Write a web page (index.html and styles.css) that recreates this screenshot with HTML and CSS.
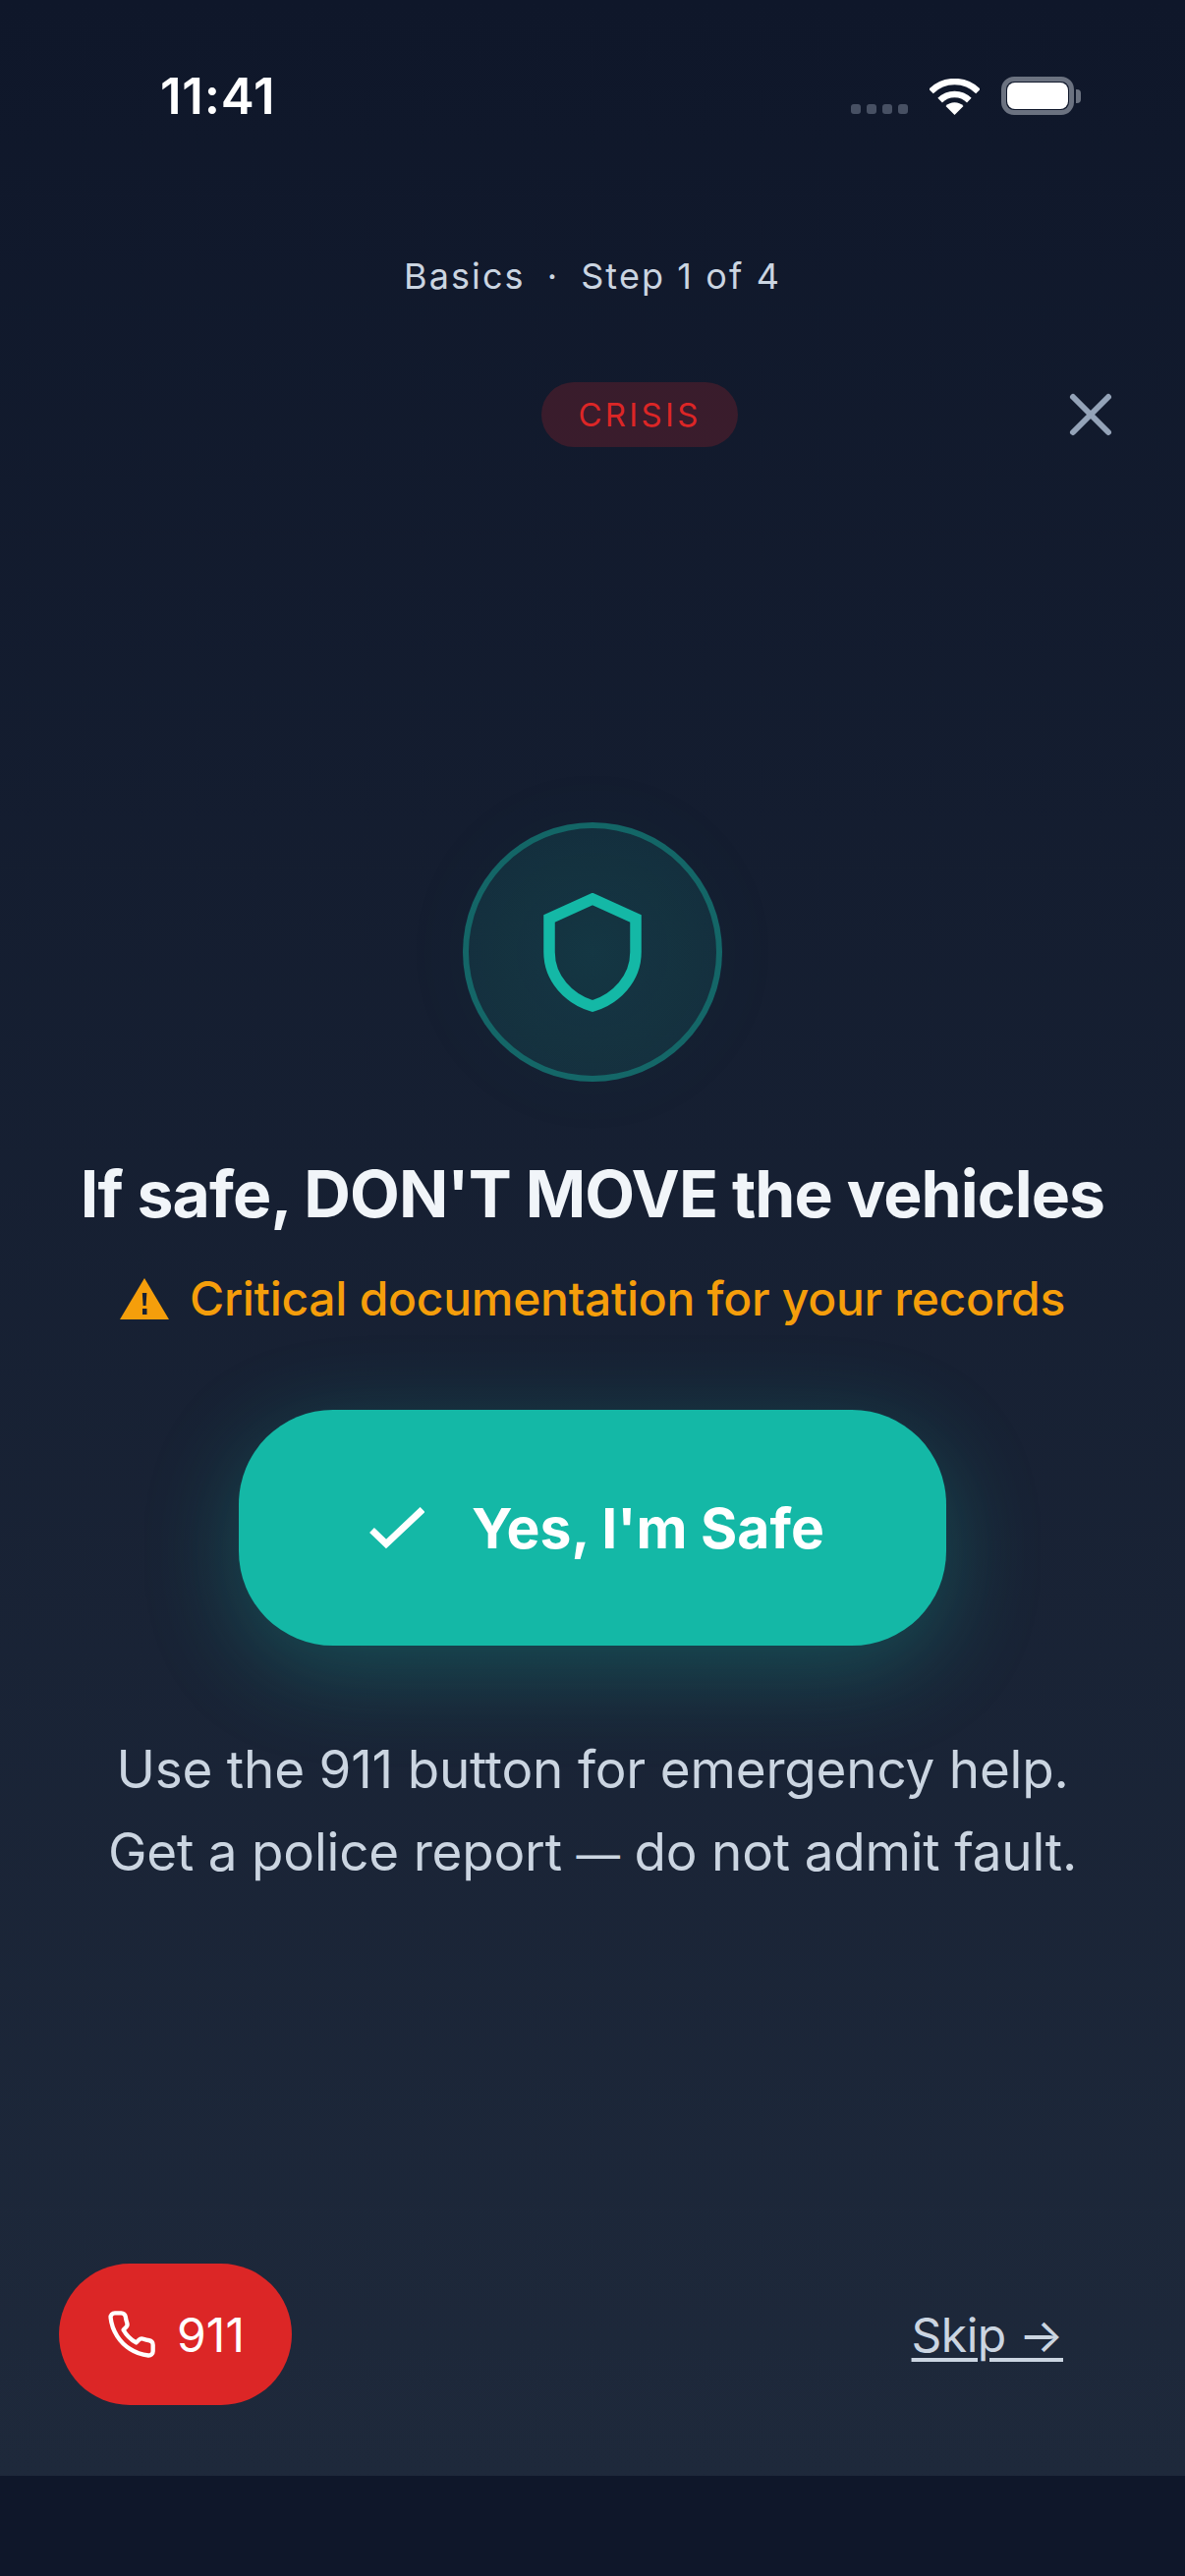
FILE: index.html
```html
<!DOCTYPE html>
<html lang="en">
<head>
<meta charset="utf-8">
<title>Crisis step</title>
<link rel="stylesheet" href="styles.css">
</head>
<body>
<main class="screen">
  <header class="status">
    <span class="time">11:41</span>
    <div class="status-icons">
      <div class="signal"><i></i><i></i><i></i><i></i></div>
      <svg class="wifi" width="51" height="37" viewBox="0 0 51 37"><path d="M1.5 13A34 34 0 0 1 49.5 13M10.65 22.15A21 21 0 0 1 40.35 22.15" fill="none" stroke="#fff" stroke-width="6.5"/><path d="M25.5 37L16.5 28A12.7 12.7 0 0 1 34.5 28Z" fill="#fff"/></svg>
      <div class="battery"><div class="battery-body"><div class="battery-fill"></div></div><div class="battery-nub"></div></div>
    </div>
  </header>
  <p class="progress"><span>Basics</span><span class="sep">·</span><span>Step 1 of 4</span></p>
  <div class="top-row">
    <span class="pill">CRISIS</span>
    <svg class="close" width="48" height="48" viewBox="0 0 48 48"><path d="M6 6L42 42M42 6L6 42" fill="none" stroke="#94a3b8" stroke-width="6" stroke-linecap="round"/></svg>
  </div>
  <section class="hero">
    <div class="halo">
      <svg width="100" height="121" viewBox="0 0 100 121"><path d="M50 6L94 26V60C94 87 74 108 50 115C26 108 6 87 6 60V26Z" fill="none" stroke="#14b8a6" stroke-width="11.5"/></svg>
    </div>
    <h1 class="title">If safe, DON'T MOVE the vehicles</h1>
    <p class="warning">
      <svg width="50" height="42" viewBox="0 0 50 42"><path d="M25 0L50 42H0Z" fill="#f59e0b"/><path d="M22.8 15H27.4L26.6 28H23.6Z" fill="#172033"/><rect x="23" y="31" width="4.5" height="6" fill="#172033"/></svg>
      <span>Critical documentation for your records</span>
    </p>
    <button class="safe" type="button">
      <svg width="65" height="43" viewBox="0 0 65 43"><path d="M11.5 23.5L26 37.5L63 2.5" fill="none" stroke="#fff" stroke-width="7"/></svg>
      <span>Yes, I'm Safe</span>
    </button>
    <p class="note">Use the 911 button for emergency help.<br>Get a police report <span class="dash">—</span> do not admit fault.</p>
  </section>
  <footer class="actions">
    <button class="call" type="button">
      <svg width="52" height="52" viewBox="0 0 24 24"><path d="M22 16.92v3a2 2 0 0 1-2.18 2 19.8 19.8 0 0 1-8.63-3.07 19.5 19.5 0 0 1-6-6 19.8 19.8 0 0 1-3.07-8.67A2 2 0 0 1 4.11 2h3a2 2 0 0 1 2 1.72c.13.96.36 1.9.7 2.81a2 2 0 0 1-.45 2.11L8.09 9.91a16 16 0 0 0 6 6l1.27-1.27a2 2 0 0 1 2.11-.45c.91.34 1.85.57 2.81.7A2 2 0 0 1 22 16.92z" fill="none" stroke="#fff" stroke-width="2" stroke-linejoin="round"/></svg>
      <span>911</span>
    </button>
    <a class="skip" href="#">Skip →</a>
  </footer>
</main>
<div class="home-strip"></div>
</body>
</html>
```
FILE: styles.css
```css
* { box-sizing: border-box; }
html, body { margin: 0; padding: 0; }
body {
  width: 1206px;
  height: 2622px;
  background: #0f172a;
  font-family: Inter, "Liberation Sans", sans-serif;
  overflow: hidden;
}
.screen {
  height: 2520px;
  background: linear-gradient(180deg, #0f172a 0%, #1e293b 100%);
  display: flex;
  flex-direction: column;
}
.home-strip { height: 102px; background: #0f172a; }
.status {
  height: 138px;
  padding: 70px 106px 0 163px;
  display: flex;
  justify-content: space-between;
  align-items: flex-start;
}
.time {
  color: #fff;
  font-size: 51px;
  line-height: 56px;
  font-weight: 600;
  letter-spacing: 0.8px;
}
.status-icons { display: flex; align-items: flex-end; gap: 22px; padding-top: 8px; }
.signal { display: flex; gap: 6px; padding-bottom: 1px; }
.signal i { width: 10px; height: 10px; border-radius: 3px; background: #475063; }
.wifi { display: block; }
.battery { display: flex; align-items: center; gap: 2px; }
.battery-body { width: 74px; height: 39px; border: 5px solid #6b7280; border-radius: 13px; padding: 1px; }
.battery-fill { width: 100%; height: 100%; background: #fff; border-radius: 8px; }
.battery-nub { width: 5px; height: 14px; background: #6b7280; border-radius: 0 4px 4px 0; }
.progress {
  margin: 113px 0 0;
  height: 60px;
  display: flex;
  justify-content: center;
  align-items: center;
  gap: 22px;
  color: #cbd5e1;
  font-size: 36px;
  letter-spacing: 2.1px;
}
.top-row {
  margin-top: 78px;
  height: 66px;
  display: flex;
  justify-content: flex-end;
  align-items: center;
  gap: 335px;
  padding-right: 72px;
}
.pill {
  width: 200px;
  height: 66px;
  border-radius: 33px;
  background: rgba(220, 38, 38, 0.2);
  color: #dc2626;
  font-size: 33px;
  letter-spacing: 3.3px;
  display: flex;
  align-items: center;
  justify-content: center;
}
.close { display: block; }
.hero {
  display: flex;
  flex-direction: column;
  align-items: center;
  padding-top: 382px;
}
.halo {
  width: 264px;
  height: 264px;
  border-radius: 50%;
  border: 6px solid rgba(20, 184, 166, 0.4);
  background: radial-gradient(circle, rgba(20, 184, 166, 0.16) 0%, rgba(20, 184, 166, 0.1) 100%);
  box-shadow: 0 0 96px rgba(20, 184, 166, 0.03);
  display: flex;
  align-items: center;
  justify-content: center;
}
.title {
  margin: 72px 0 0;
  color: #f1f5f9;
  font-size: 66px;
  line-height: 84px;
  font-weight: 700;
  letter-spacing: -0.9px;
  white-space: nowrap;
}
.warning {
  margin: 29px 0 0;
  display: flex;
  align-items: center;
  gap: 21px;
  color: #f59e0b;
  font-size: 48px;
  line-height: 72px;
  font-weight: 500;
  letter-spacing: -0.28px;
}
.safe {
  margin-top: 77px;
  width: 720px;
  height: 240px;
  border: 0;
  border-radius: 96px;
  background: #14b8a6;
  color: #fff;
  font-family: inherit;
  font-size: 57px;
  font-weight: 700;
  display: flex;
  align-items: center;
  justify-content: center;
  gap: 48px;
  box-shadow: 0 24px 96px rgba(20, 184, 166, 0.3);
}
.note {
  margin: 84px 0 0;
  color: #cbd5e1;
  font-size: 53px;
  line-height: 84px;
  letter-spacing: -0.2px;
  text-align: center;
}
.dash { font-size: 0.84em; }
.actions {
  margin-top: auto;
  padding: 0 124px 72px 60px;
  display: flex;
  justify-content: space-between;
  align-items: center;
}
.call {
  width: 237px;
  height: 144px;
  border: 0;
  border-radius: 72px;
  background: #dc2626;
  color: #fff;
  font-family: inherit;
  font-size: 48px;
  font-weight: 400;
  display: flex;
  align-items: center;
  justify-content: center;
  gap: 20px;
}
.skip {
  color: #cbd5e1;
  font-size: 48px;
  letter-spacing: -0.5px;
  text-decoration: underline;
  text-decoration-thickness: 4px;
  text-underline-offset: 6px;
}
```
